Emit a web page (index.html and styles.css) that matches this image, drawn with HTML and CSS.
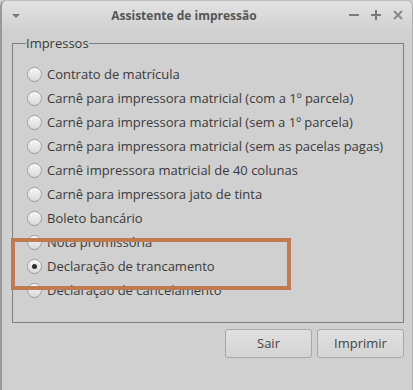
FILE: index.html
```html
<!DOCTYPE html>
<html>
    <head>
        <meta charset="utf-8">
        <title>Assistente de impressão</title>
        <link rel="stylesheet" href="styles.css">
    </head>
    <body>
        <div class="window">
            <div class="titlebar">
                <span class="menuArrow"></span>
                <span class="title">Assistente de impressão</span>
                <span class="ctrls">
                    <svg width="12" height="12" viewBox="0 0 12 12"><path d="M1 6h10" stroke="#7a7a7a" stroke-width="2"/></svg>
                    <svg width="12" height="12" viewBox="0 0 12 12"><path d="M1 6h10M6 1v10" stroke="#7a7a7a" stroke-width="2"/></svg>
                    <svg width="12" height="12" viewBox="0 0 12 12"><path d="M2 2l8 8M10 2l-8 8" stroke="#8a8a8a" stroke-width="2"/></svg>
                </span>
            </div>
            <div class="content">
                <fieldset class="group">
                    <legend>Impressos</legend>
                    <label class="opt"><input type="radio" name="imp"><span>Contrato de matrícula</span></label>
                    <label class="opt"><input type="radio" name="imp"><span>Carnê para impressora matricial (com a 1º parcela)</span></label>
                    <label class="opt"><input type="radio" name="imp"><span>Carnê para impressora matricial (sem a 1º parcela)</span></label>
                    <label class="opt"><input type="radio" name="imp"><span>Carnê para impressora matricial (sem as pacelas pagas)</span></label>
                    <label class="opt"><input type="radio" name="imp"><span>Carnê impressora matricial de 40 colunas</span></label>
                    <label class="opt"><input type="radio" name="imp"><span>Carnê para impressora jato de tinta</span></label>
                    <label class="opt"><input type="radio" name="imp"><span>Boleto bancário</span></label>
                    <label class="opt"><input type="radio" name="imp"><span>Nota promissória</span></label>
                    <label class="opt"><input type="radio" name="imp" checked><span>Declaração de trancamento</span></label>
                    <label class="opt"><input type="radio" name="imp"><span>Declaração de cancelamento</span></label>
                    <div class="highlight"></div>
                </fieldset>
                <div class="buttons">
                    <div class="btn">Sair</div>
                    <div class="btn">Imprimir</div>
                </div>
            </div>
        </div>
    </body>
</html>
```

FILE: styles.css
```css
html,body{
    margin: 0px;
    background-color: #d0d0d0;
}

.window{
    width: 413px;
    height: 390px;
    box-sizing: border-box;
    border-left: 2px solid #9a9a9a;
    border-right: 1px solid #b0b0b0;
    border-radius: 6px 6px 0 0;
    background-color: #d0d0d0;
    font-family: "Open Sans", "Noto Sans", sans-serif;
    font-size: 13px;
    color: #3a3a3a;
    overflow: hidden;
}

.titlebar{
    height: 28px;
    display: flex;
    align-items: center;
    padding: 0 8px 0 10px;
    background: linear-gradient(#e2e2e2, #d2d2d2);
    border-top: 1px solid #bcbcbc;
    border-radius: 6px 6px 0 0;
}

.menuArrow{
    width: 0;
    height: 0;
    border-left: 4px solid transparent;
    border-right: 4px solid transparent;
    border-top: 4px solid #777;
    margin-top: 1px;
}

.title{
    flex: 1;
    text-align: center;
    font-weight: bold;
    font-size: 12px;
    color: #555;
}

.ctrls{
    display: flex;
    gap: 10px;
}

.content{
    padding: 5px 8px 0 10px;
}

.group{
    margin: 0;
    padding: 10px 0 20px 14px;
    border: 1px solid #808080;
    position: relative;
}

.group legend{
    padding: 0;
    margin-left: -1px;
    font-size: 13px;
}

.opt{
    display: flex;
    align-items: center;
    height: 24px;
}

.opt input{
    appearance: none;
    -webkit-appearance: none;
    box-sizing: border-box;
    margin: 0 5px 0 0;
    width: 15px;
    height: 15px;
    border: 1px solid #9c9c9c;
    border-radius: 50%;
    background: linear-gradient(#f6f6f6, #d9d9d9);
    box-shadow: inset 0 1px 0 #fff;
    position: relative;
}

.opt input:checked::after{
    content: "";
    position: absolute;
    left: 4px;
    top: 4px;
    width: 5px;
    height: 5px;
    border-radius: 50%;
    background-color: #2e2e2e;
}

.highlight{
    position: absolute;
    left: -2px;
    top: 186px;
    width: 272px;
    height: 44px;
    border: 4px solid #c07a52;
    z-index: 2;
}

.buttons{
    display: flex;
    justify-content: flex-end;
    gap: 5px;
    margin-top: 6px;
}

.btn{
    width: 85px;
    height: 27px;
    line-height: 27px;
    text-align: center;
    border: 1px solid #a8a8a8;
    border-radius: 3px;
    background: linear-gradient(#e0e0e0, #d4d4d4);
    color: #444;
}
```
